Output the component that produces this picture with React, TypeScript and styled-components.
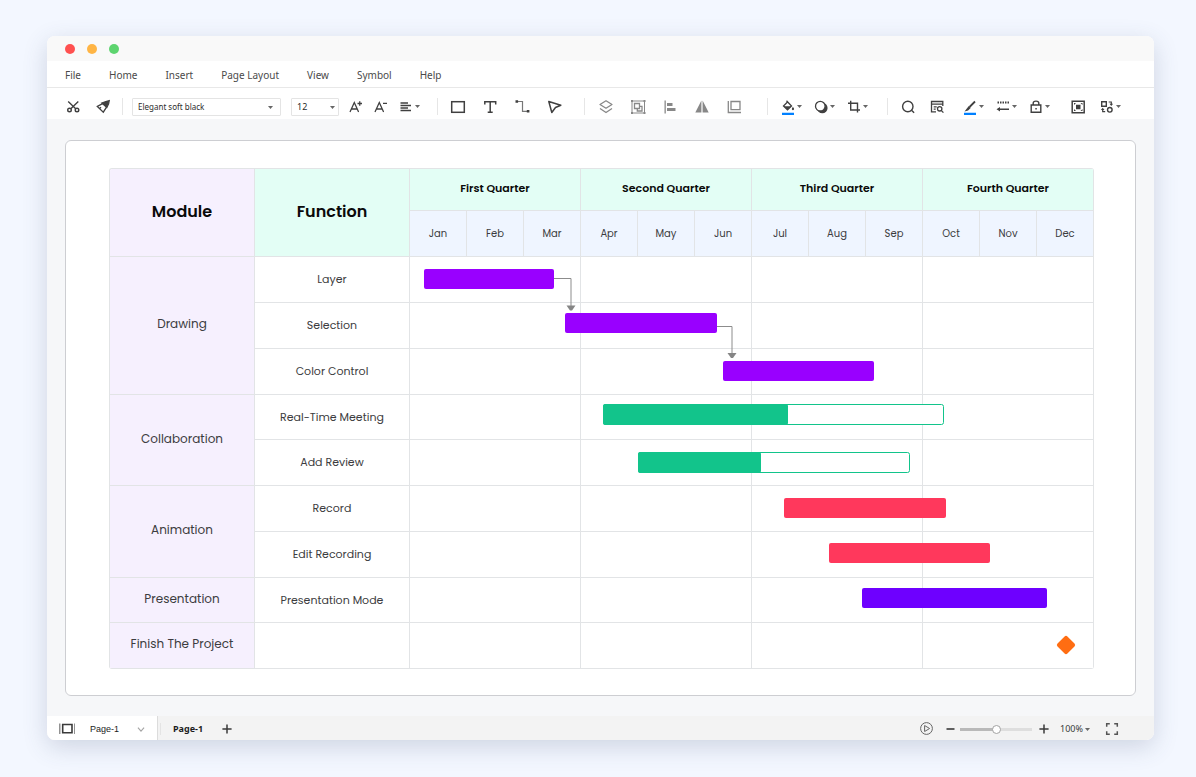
import React from "react";
import styled, { createGlobalStyle } from "styled-components";

const GlobalStyle = createGlobalStyle`
  *, *::before, *::after { box-sizing: border-box; }
  body {
    margin: 0;
    background: #f3f7ff;
    color: #3f3f3f;
    font-family: "Noto Sans", "Open Sans", sans-serif;
  }
  button, select, input { font: inherit; color: inherit; margin: 0; }
`;

const Page = styled.main`
  display: flex;
  min-height: 100vh;
  padding: 36px 42px 37px 47px;
`;

const Window = styled.section`
  flex: 1;
  min-width: 0;
  display: flex;
  flex-direction: column;
  overflow: hidden;
  border-radius: 8px;
  background: #fff;
  box-shadow: 0 7px 24px rgba(60, 75, 110, 0.2);
`;

const TitleBar = styled.header`
  display: flex;
  align-items: center;
  gap: 12px;
  height: 25px;
  padding-left: 18px;
  background: #f9f9f9;
`;

const Light = styled.span<{ $color: string }>`
  width: 10px;
  height: 10px;
  border-radius: 50%;
  background: ${(p) => p.$color};
`;

const MenuBar = styled.nav`
  display: flex;
  align-items: center;
  gap: 28px;
  height: 27px;
  padding: 2px 0 0 18px;
  border-bottom: 1px solid #e8e8e8;
`;

const MenuItem = styled.button`
  padding: 0;
  border: 0;
  background: none;
  font-size: 10px;
  line-height: 16px;
  color: #4a4a4a;
  white-space: nowrap;
`;

const ToolBar = styled.div`
  display: flex;
  align-items: center;
  height: 31px;
  padding: 6px 18px 0;
`;

const Group = styled.div<{ $gap: number; $before?: number }>`
  display: flex;
  align-items: center;
  gap: ${(p) => p.$gap}px;
  margin-left: ${(p) => p.$before ?? 0}px;
`;

const Divider = styled.span<{ $before: number }>`
  width: 1px;
  height: 17px;
  margin-left: ${(p) => p.$before}px;
  background: #e6e6e6;
`;

const Tool = styled.button<{ $muted?: boolean }>`
  display: flex;
  align-items: center;
  gap: 1px;
  padding: 0;
  border: 0;
  background: none;
  color: ${(p) => (p.$muted ? "#888" : "#404040")};
`;

const IconSvg = styled.svg`
  display: block;
  flex: none;
  fill: none;
  stroke: currentColor;
`;

const CaretSvg = styled.svg`
  display: block;
  flex: none;
  width: 5px;
  height: 3px;
  fill: #666;
`;

const Caret = () => (
  <CaretSvg viewBox="0 0 5 3">
    <path d="M0 0h5L2.5 3z" />
  </CaretSvg>
);

const Picker = styled.label<{ $width: number; $inset: number }>`
  position: relative;
  width: ${(p) => p.$width}px;
  height: 18px;

  ${CaretSvg} {
    position: absolute;
    right: ${(p) => p.$inset}px;
    top: 8px;
    pointer-events: none;
  }
`;

const PickerSelect = styled.select<{ $size: number }>`
  appearance: none;
  display: block;
  width: 100%;
  height: 100%;
  padding: 0 16px 0 5px;
  border: 1px solid #e4e4e4;
  border-radius: 1px;
  background: #fff;
  font-size: ${(p) => p.$size}px;
  line-height: 16px;
  color: #2d2d2d;
`;

const Canvas = styled.div`
  flex: 1;
  display: flex;
  padding: 21px 18px 20px;
  background: #f6f7f9;
`;

const Sheet = styled.article`
  flex: 1;
  min-width: 0;
  padding: 27px 41px 26px 43px;
  border: 1px solid #cdced2;
  border-radius: 6px;
  background: #fff;
`;

const Gantt = styled.div`
  position: relative;
  font-family: Poppins, Inter, sans-serif;
`;

const Table = styled.table`
  width: 100%;
  table-layout: fixed;
  border-collapse: separate;
  border-spacing: 0;
  border: solid #e2e4e6;
  border-width: 1px 0 0 1px;
  border-radius: 3px;
  overflow: hidden;
`;

const Col = styled.col<{ $width?: number }>`
  width: ${(p) => (p.$width ? `${p.$width}px` : "auto")};
`;

const HeadRow = styled.tr<{ $height: number }>`
  height: ${(p) => p.$height}px;
`;

const BodyRow = styled.tr`
  height: 46px;

  &:nth-child(4n) {
    height: 45px;
  }
`;

const cell = `
  padding: 0;
  border: solid #e2e4e6;
  border-width: 0 1px 1px 0;
  text-align: center;
  vertical-align: middle;
`;

const TitleCell = styled.th<{ $fill: string }>`
  ${cell}
  padding-bottom: 3px;
  background: ${(p) => p.$fill};
  font-size: 16px;
  font-weight: 600;
  color: #0a0a0a;
`;

const QuarterCell = styled.th`
  ${cell}
  padding-bottom: 3px;
  background: #e3fef5;
  font-size: 11px;
  line-height: 16px;
  font-weight: 600;
  color: #0a0a0a;
`;

const MonthCell = styled.th`
  ${cell}
  background: #eff5ff;
  font-size: 10px;
  font-weight: 400;
  color: #3c3c40;
`;

const ModuleCell = styled.th`
  ${cell}
  padding-bottom: 3px;
  background: #f6f0fe;
  font-size: 12px;
  font-weight: 400;
  color: #3c3c40;
`;

const FunctionCell = styled.td`
  ${cell}
  font-size: 11px;
  color: #3c3c40;
`;

const SpanCell = styled.td`
  ${cell}
`;

const Bars = styled.svg`
  position: absolute;
  left: 300px;
  top: 88px;
  width: calc(100% - 301px);
  height: calc(100% - 89px);
`;

const StatusBar = styled.footer`
  display: flex;
  align-items: center;
  height: 24px;
  background: #f3f3f3;
  font-size: 9px;
  line-height: 16px;
  color: #1c1c1c;
`;

const PagePanel = styled.div`
  display: flex;
  align-items: center;
  gap: 15px;
  width: 111px;
  height: 100%;
  padding: 1px 9px 0 12px;
  border-right: 1px solid #dcdcdc;
  background: #fff;
`;

const PageSelect = styled.button`
  flex: 1;
  display: flex;
  align-items: center;
  justify-content: space-between;
  padding: 0;
  border: 0;
  background: none;
  font-family: "Liberation Sans", Arial, sans-serif;
  font-size: 9px;
`;

const PageTabs = styled.div`
  display: flex;
  align-items: center;
  gap: 9px;
  padding: 2px 0 0 2px;
`;

const PageTab = styled.button`
  padding: 0 7px 0 12px;
  border: 0;
  border-left: 1px solid #e4e4e4;
  background: none;
  font-weight: 700;
  font-size: 9px;
  line-height: 12px;
`;

const ZoomTools = styled.div`
  display: flex;
  align-items: center;
  gap: 8px;
  margin-left: auto;
  padding: 2px 34px 0 0;
`;

const Plain = styled.button<{ $after?: number }>`
  display: flex;
  align-items: center;
  gap: 2px;
  margin-right: ${(p) => p.$after ?? 0}px;
  padding: 0;
  border: 0;
  background: none;
  color: #3a3a3a;
`;

const ZoomSlider = styled.input`
  && {
    margin-right: 2px;
  }
  appearance: none;
  width: 72px;
  height: 9px;
  background: linear-gradient(#b9b9b9, #b9b9b9) left center / 50% 3px no-repeat,
    linear-gradient(#dedede, #dedede) center / 100% 3px no-repeat;

  &::-webkit-slider-thumb {
    appearance: none;
    width: 9px;
    height: 9px;
    border: 1px solid #a3a3a3;
    border-radius: 50%;
    background: #fff;
  }
`;

const ICONS: Record<string, React.ReactNode> = {
  cut: (
    <g strokeWidth="1.4">
      <circle cx="4.5" cy="11" r="1.8" />
      <circle cx="12" cy="11" r="1.8" />
      <path d="M3.2 2.5l7.5 7.2M13.3 2.5L5.8 9.7" />
    </g>
  ),
  brush: (
    <g strokeWidth="1.3">
      <path d="M8.5 4.2L2.3 7.4l6 5.8 3.4-5.400" />
      <path d="M6.800 4l4-1.500 3.400-.8-.6 3L11.800 8.500z" fill="currentColor" />
      <path d="M4.500 9.500l1.500-1.300" />
    </g>
  ),
  fontUp: (
    <path strokeWidth="1.3" d="M2 13L6.3 3.5 10.6 13M3.600 10H9M9.500 4.500H14M11.750 2.200v4.600" />
  ),
  fontDown: <path strokeWidth="1.3" d="M2 13L6.3 3.5 10.6 13M3.6 10H9M10 4.3h4" />,
  align: <path strokeWidth="1.4" d="M2.500 4h7.500M2.500 6.500h10.500M2.500 9h7.500M2.500 11.500h10.500" />,
  rect: <rect x="1.7" y="2.7" width="12.6" height="10.6" strokeWidth="1.5" />,
  text: <path strokeWidth="1.5" d="M2.8 5.500V2.800h10.900v2.700M8.200 2.800v10.400M5.700 13.200h5" />,
  connector: (
    <g strokeWidth="1.2">
      <path d="M3 2.500h5.500v9.800H14" stroke="#777" />
      <path d="M1.500 1.200h2.600v2.600H1.500zM12.800 11h2.600v2.600h-2.600z" fill="currentColor" stroke="none" />
    </g>
  ),
  pointer: (
    <path strokeWidth="1.5" strokeLinejoin="round" d="M2.8 2.500l12 3.800-5.300 2.200-3.700 5z" />
  ),
  layers: (
    <g strokeWidth="1.3" strokeLinejoin="round">
      <path d="M8 1.8l6 3.700-6 3.700-6-3.700z" />
      <path d="M2 9.500l6 4 6-4" />
    </g>
  ),
  group: (
    <g strokeWidth="1">
      <path d="M2 1.500v13M14.500 1.500v13M1.500 2H15M1.500 14H15" />
      <path d="M4.500 4.500h5v5h-5z" strokeWidth="1.300" />
      <path d="M9.500 7.300H12v4.700H7.300V9.500" strokeWidth="1.300" />
      <path d="M1 1h2v2H1zM13.500 1h2v2h-2zM1 13h2v2H1zM13.500 13h2v2h-2z" fill="currentColor" stroke="none" />
    </g>
  ),
  alignLeft: (
    <path
      stroke="none"
      fill="currentColor"
      d="M2.500 1.500h1.300v13H2.500zM5 4h5.500v3H5zM5 9h8.500v3H5z"
    />
  ),
  flip: <path stroke="none" fill="currentColor" d="M7.400 1.500V13.500H1.300zM8.600 1.500V13.500h6.100z" />,
  frame: (
    <g strokeWidth="1.3">
      <path d="M5 2.500h9v8.200H5z" />
      <path d="M2.300 2v11.500H15" />
    </g>
  ),
  fill: (
    <g strokeWidth="1.3">
      <path d="M7.500 3L3.500 7l4 3.800 4-3.800-5-5.300" />
      <path d="M3.500 7.200h8L7.500 10.800z" fill="currentColor" stroke="none" />
      <path
        d="M12.900 7.800c1 1.400 1.200 2 1.200 2.300a1.100 1.100 0 01-2.300 0c0-.3.300-.9 1.100-2.300z"
        fill="currentColor"
        stroke="none"
      />
      <path d="M2 14.900h12" stroke="#0080ff" strokeWidth="2.200" />
    </g>
  ),
  shadow: (
    <g>
      <circle cx="9.300" cy="9" r="5.300" fill="currentColor" stroke="none" />
      <circle cx="7.300" cy="7.200" r="4.800" fill="#fff" strokeWidth="1.300" />
    </g>
  ),
  crop: <path strokeWidth="1.400" d="M4.700 1.800v9.200H14M2 4.300h9.500V13.500" />,
  search: (
    <g strokeWidth="1.400">
      <circle cx="7.800" cy="7.500" r="5.200" />
      <path d="M11.500 11.200l2.600 2.600" />
    </g>
  ),
  find: (
    <g strokeWidth="1.300">
      <path d="M7 12.800H2.500V2.500h11.300v4.500M2.500 5.200h11.300M4.700 7.800h3M4.700 10.200h2" />
      <circle cx="10.700" cy="9.800" r="2.200" />
      <path d="M12.200 11.400l2.200 2.200" />
    </g>
  ),
  pen: (
    <g>
      <path d="M13 2.500L7.500 8" strokeWidth="1.800" />
      <path d="M6.800 7l1.900 1.900-2.600 2.500-3.600 1z" fill="currentColor" stroke="none" />
      <path d="M2 14.900h12" stroke="#0080ff" strokeWidth="2.200" />
    </g>
  ),
  lines: (
    <g>
      <path d="M2.500 3.400H14" strokeWidth="2" strokeDasharray="1.500 1" />
      <path d="M3 10.300h11" strokeWidth="1.400" />
      <path d="M1.500 10.300L5 8v4.600z" fill="currentColor" stroke="none" />
    </g>
  ),
  lock: (
    <g strokeWidth="1.400">
      <path d="M3.200 6h9.600v7.300H3.200zM5.200 6V4.200C5.200 1.400 10.800 1.400 10.800 4.200V6" />
      <path d="M7.300 8.900h1.500v1.500H7.300z" fill="currentColor" stroke="none" />
    </g>
  ),
  fit: (
    <g>
      <path d="M2.200 2.200h12v11.600h-12z" strokeWidth="1.500" />
      <path d="M6 5.800h4.500v4.500H6z" fill="currentColor" stroke="none" />
      <path
        d="M4 4h2L4 6zM12.500 4h-2l2 2zM4 12h2L4 10zM12.500 12h-2l2-2z"
        fill="currentColor"
        stroke="none"
      />
    </g>
  ),
  swap: (
    <g strokeWidth="1.400">
      <path d="M2.700 2.800h4.600v4.500H2.700z" />
      <circle cx="10.800" cy="10.800" r="2.300" />
      <path d="M9.700 3h2.600v2M6.200 12.700H3.700v-2" strokeWidth="1.200" />
      <path d="M10.500 4.800h3.600l-1.800 2.200zM1.900 10.900h3.600L3.700 8.800z" fill="currentColor" stroke="none" />
    </g>
  ),
  pages: (
    <g>
      <path d="M3.700 3.500h9.300v8.300H3.700z" strokeWidth="1.600" />
      <path d="M.8 2.500v10.500M15.800 2.500v10.500" strokeWidth="1.200" stroke="#777" />
    </g>
  ),
  chevron: <path strokeWidth="1.300" stroke="#a5a5a5" d="M4.500 6.500L8 10.500l3.500-4" />,
  plus: <path strokeWidth="1.500" d="M8 3.400v9.200M3.400 8h9.200" />,
  minus: <path strokeWidth="1.600" d="M4.500 8h8" />,
  play: (
    <g strokeWidth="1" stroke="#666">
      <circle cx="8.500" cy="7.500" r="5.900" />
      <path d="M6.600 4.500l5 3-5 3z" />
    </g>
  ),
  full: (
    <path
      strokeWidth="1.500"
      stroke="#555"
      d="M2.700 5.800V2.700h3.100M10.200 2.700h3.100v3.100M13.300 10.200v3.100h-3.100M5.800 13.300H2.700v-3.100"
    />
  ),
};

const Icon = ({ name, size = 16 }: { name: string; size?: number }) => (
  <IconSvg width={size} height={size} viewBox="0 0 16 16" aria-hidden="true">
    {ICONS[name]}
  </IconSvg>
);

type ToolSpec = { icon: string; label: string; menu?: boolean; muted?: boolean };

const ToolGroup = ({ tools, gap, before }: { tools: ToolSpec[]; gap: number; before?: number }) => (
  <Group $gap={gap} $before={before}>
    {tools.map((t) => (
      <Tool key={t.icon} type="button" aria-label={t.label} $muted={t.muted}>
        <Icon name={t.icon} />
        {t.menu && <Caret />}
      </Tool>
    ))}
  </Group>
);

const MENU = ["File", "Home", "Insert", "Page Layout", "View", "Symbol", "Help"];

const CLIPBOARD: ToolSpec[] = [
  { icon: "cut", label: "Cut" },
  { icon: "brush", label: "Format painter" },
];
const FONT: ToolSpec[] = [
  { icon: "fontUp", label: "Increase font size" },
  { icon: "fontDown", label: "Decrease font size" },
  { icon: "align", label: "Text alignment", menu: true },
];
const INSERT: ToolSpec[] = [
  { icon: "rect", label: "Shape" },
  { icon: "text", label: "Text" },
  { icon: "connector", label: "Connector" },
  { icon: "pointer", label: "Select" },
];
const ARRANGE: ToolSpec[] = [
  { icon: "layers", label: "Layers", muted: true },
  { icon: "group", label: "Group", muted: true },
  { icon: "alignLeft", label: "Align", muted: true },
  { icon: "flip", label: "Flip", muted: true },
  { icon: "frame", label: "Size", muted: true },
];
const STYLE: ToolSpec[] = [
  { icon: "fill", label: "Fill", menu: true },
  { icon: "shadow", label: "Shadow", menu: true },
  { icon: "crop", label: "Crop", menu: true },
];
const FIND: ToolSpec[] = [
  { icon: "search", label: "Search" },
  { icon: "find", label: "Find in page" },
];
const LINE: ToolSpec[] = [
  { icon: "pen", label: "Line colour", menu: true },
  { icon: "lines", label: "Line style", menu: true },
  { icon: "lock", label: "Lock", menu: true },
];
const VIEW: ToolSpec[] = [
  { icon: "fit", label: "Fit to page" },
  { icon: "swap", label: "Replace shape", menu: true },
];

const QUARTERS = ["First Quarter", "Second Quarter", "Third Quarter", "Fourth Quarter"];
const MONTHS = ["Jan", "Feb", "Mar", "Apr", "May", "Jun", "Jul", "Aug", "Sep", "Oct", "Nov", "Dec"];

const MODULES = [
  { name: "Drawing", functions: ["Layer", "Selection", "Color Control"] },
  { name: "Collaboration", functions: ["Real-Time Meeting", "Add Review"] },
  { name: "Animation", functions: ["Record", "Edit Recording"] },
  { name: "Presentation", functions: ["Presentation Mode"] },
  { name: "Finish The Project", functions: [""] },
];

const TASKS = [
  { x: 15, y: 13, width: 130, color: "#9900ff" },
  { x: 156, y: 57, width: 152, color: "#9900ff" },
  { x: 314, y: 105, width: 151, color: "#9900ff" },
  { x: 194, y: 148, width: 341, color: "#12c48b", done: 185 },
  { x: 229, y: 196, width: 272, color: "#12c48b", done: 123 },
  { x: 375, y: 242, width: 162, color: "#ff385c" },
  { x: 420, y: 287, width: 161, color: "#ff385c" },
  { x: 453, y: 332, width: 185, color: "#6e00ff" },
];

const Timeline = () => (
  <Bars viewBox="0 0 684 412" preserveAspectRatio="none" aria-hidden="true">
    {TASKS.map((t) => (
      <g key={t.y}>
        {t.done && (
          <rect
            x={t.x + 0.5}
            y={t.y + 0.5}
            width={t.width - 1}
            height={20}
            rx={2}
            fill="#fff"
            stroke={t.color}
          />
        )}
        <rect x={t.x} y={t.y} width={t.done ?? t.width} height={t.done ? 21 : 20} rx={2} fill={t.color} />
      </g>
    ))}
    <g fill="none" stroke="#8c8c8c">
      <path d="M145 22.5H162V50" />
      <path d="M308 70.5H323V97" />
    </g>
    <g fill="#858585">
      <path d="M157.500 49.500h9l-3.500 5h-2z" />
      <path d="M318.500 97h9l-3.500 5h-2z" />
    </g>
    <rect x="650" y="382" width="14" height="14" rx="2" fill="#ff6d12" transform="rotate(45 657 389)" />
  </Bars>
);

export default function App() {
  return (
    <>
      <GlobalStyle />
      <Page>
        <Window>
          <TitleBar>
            <Light $color="#ff5150" />
            <Light $color="#ffb545" />
            <Light $color="#5dd46f" />
          </TitleBar>
          <MenuBar>
            {MENU.map((m) => (
              <MenuItem key={m} type="button">
                {m}
              </MenuItem>
            ))}
          </MenuBar>
          <ToolBar>
            <ToolGroup tools={CLIPBOARD} gap={14} />
            <Divider $before={11} />
            <Group $gap={10} $before={9}>
              <Picker $width={149} $inset={8}>
                <PickerSelect $size={8} aria-label="Font">
                  <option>Elegant soft black</option>
                </PickerSelect>
                <Caret />
              </Picker>
              <Picker $width={48} $inset={4}>
                <PickerSelect $size={9} aria-label="Font size">
                  <option>12</option>
                </PickerSelect>
                <Caret />
              </Picker>
            </Group>
            <ToolGroup tools={FONT} gap={9} before={9} />
            <Divider $before={17} />
            <ToolGroup tools={INSERT} gap={16} before={12} />
            <Divider $before={22} />
            <ToolGroup tools={ARRANGE} gap={16} before={13} />
            <Divider $before={25} />
            <ToolGroup tools={STYLE} gap={11} before={12} />
            <Divider $before={19} />
            <ToolGroup tools={FIND} gap={13} before={12} />
            <ToolGroup tools={LINE} gap={11} before={17} />
            <ToolGroup tools={VIEW} gap={13} before={20} />
          </ToolBar>
          <Canvas>
            <Sheet>
              <Gantt>
                <Table>
                  <colgroup>
                    <Col $width={145} />
                    <Col $width={155} />
                    {MONTHS.map((m) => (
                      <Col key={m} />
                    ))}
                  </colgroup>
                  <thead>
                    <HeadRow $height={42}>
                      <TitleCell rowSpan={2} $fill="#f6f0fe">
                        Module
                      </TitleCell>
                      <TitleCell rowSpan={2} $fill="#e3fef5">
                        Function
                      </TitleCell>
                      {QUARTERS.map((q) => (
                        <QuarterCell key={q} colSpan={3}>
                          {q}
                        </QuarterCell>
                      ))}
                    </HeadRow>
                    <HeadRow $height={46}>
                      {MONTHS.map((m) => (
                        <MonthCell key={m}>{m}</MonthCell>
                      ))}
                    </HeadRow>
                  </thead>
                  <tbody>
                    {MODULES.map((mod) =>
                      mod.functions.map((fn, i) => (
                        <BodyRow key={mod.name + fn}>
                          {i === 0 && <ModuleCell rowSpan={mod.functions.length}>{mod.name}</ModuleCell>}
                          <FunctionCell>{fn}</FunctionCell>
                          {QUARTERS.map((q) => (
                            <SpanCell key={q} colSpan={3} />
                          ))}
                        </BodyRow>
                      ))
                    )}
                  </tbody>
                </Table>
                <Timeline />
              </Gantt>
            </Sheet>
          </Canvas>
          <StatusBar>
            <PagePanel>
              <Plain type="button" aria-label="Page list">
                <Icon name="pages" />
              </Plain>
              <PageSelect type="button">
                Page-1
                <Icon name="chevron" size={14} />
              </PageSelect>
            </PagePanel>
            <PageTabs>
              <PageTab type="button">Page-1</PageTab>
              <Plain type="button" aria-label="Add page">
                <Icon name="plus" />
              </Plain>
            </PageTabs>
            <ZoomTools>
              <Plain type="button" aria-label="Present">
                <Icon name="play" />
              </Plain>
              <Group $gap={2}>
                <Plain type="button" aria-label="Zoom out">
                  <Icon name="minus" />
                </Plain>
                <ZoomSlider type="range" aria-label="Zoom" min={0} max={200} defaultValue={100} />
                <Plain type="button" aria-label="Zoom in">
                  <Icon name="plus" />
                </Plain>
              </Group>
              <Plain type="button" $after={6}>
                100%
                <Caret />
              </Plain>
              <Plain type="button" aria-label="Full screen">
                <Icon name="full" />
              </Plain>
            </ZoomTools>
          </StatusBar>
        </Window>
      </Page>
    </>
  );
}
